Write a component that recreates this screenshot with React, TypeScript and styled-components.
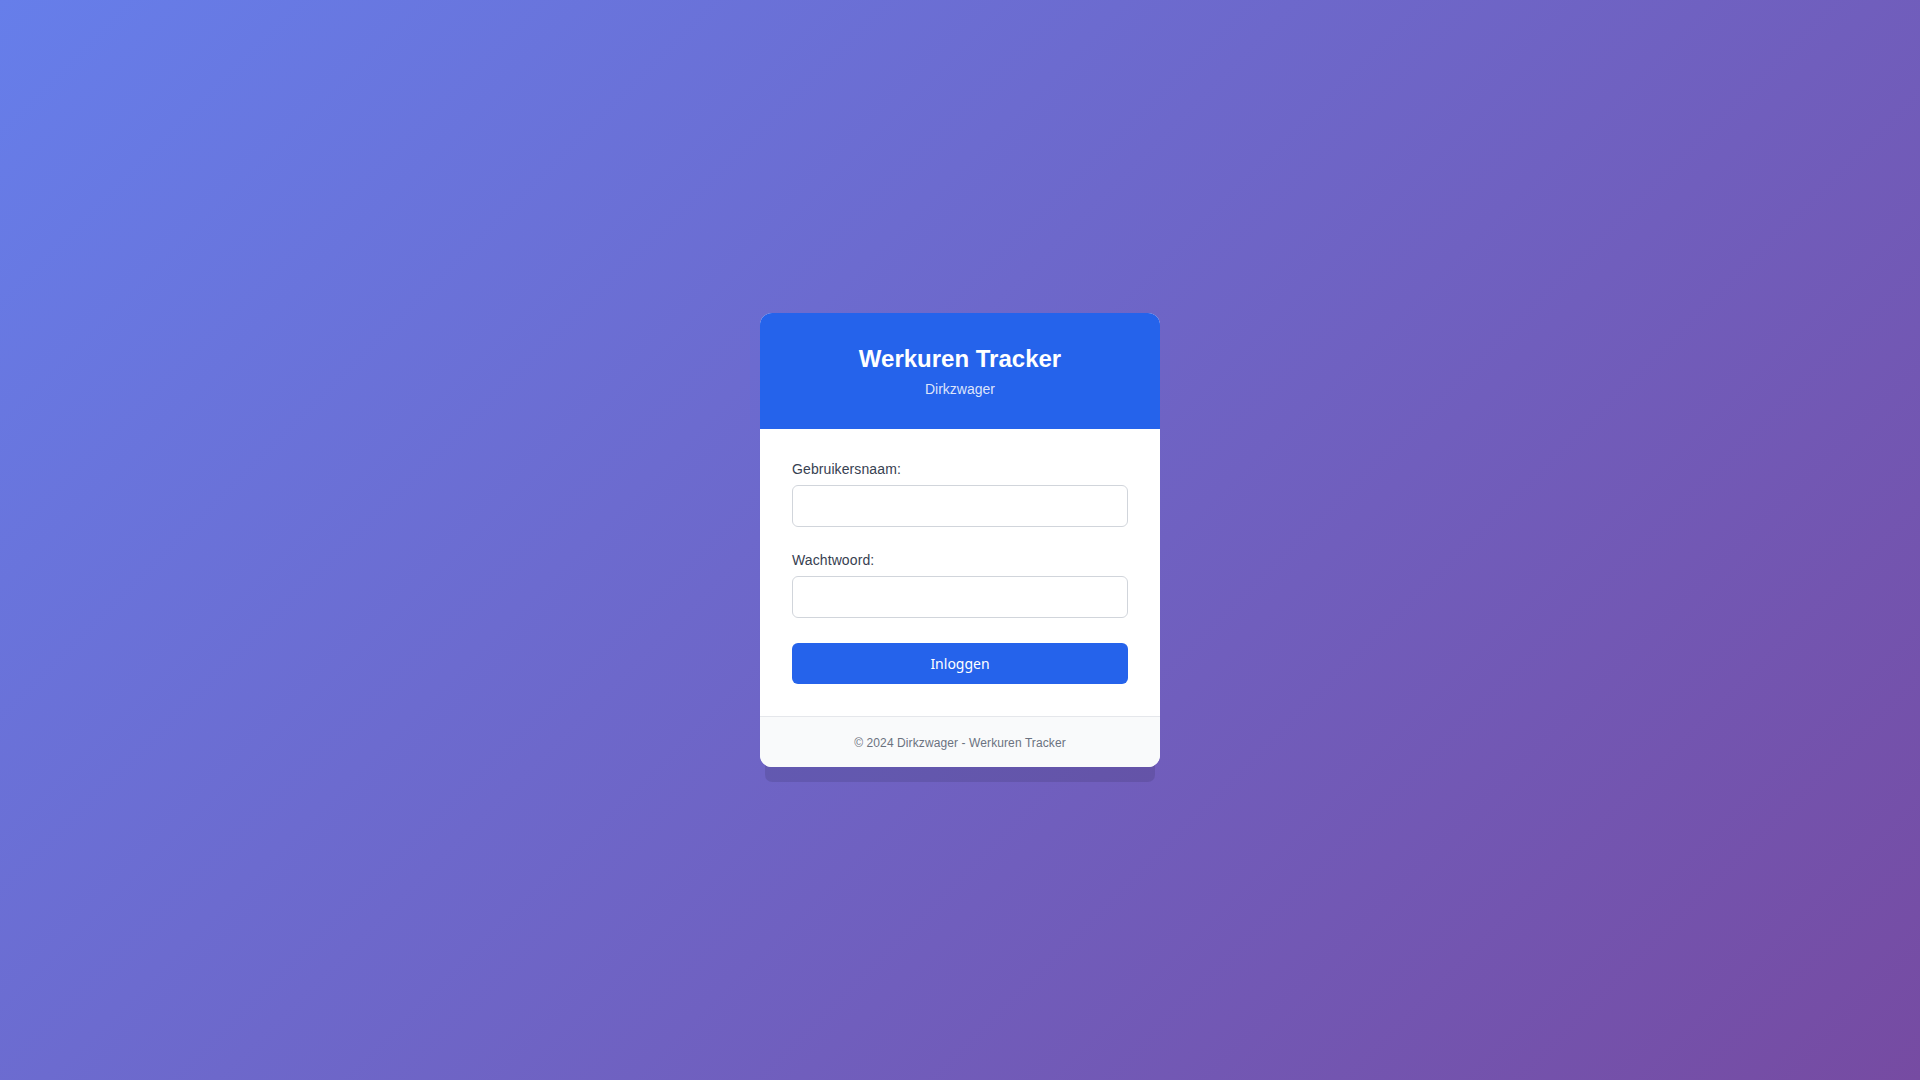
import styled, { createGlobalStyle } from "styled-components";

const GlobalStyle = createGlobalStyle`
  * {
    box-sizing: border-box;
  }
  html, body {
    margin: 0;
    padding: 0;
  }
  body {
    font-family: "Liberation Sans", Arial, sans-serif;
    background: linear-gradient(135deg, #667eea 0%, #764ba2 100%);
    min-height: 100vh;
  }
`;

export default function App(): JSX.Element {
  return (
    <>
      <GlobalStyle />
      <Page>
        <Card>
          <Header>
            <Title>Werkuren Tracker</Title>
            <Subtitle>Dirkzwager</Subtitle>
          </Header>
          <Form
            onSubmit={(e) => {
              e.preventDefault();
            }}
          >
            <FormGroup>
              <Label htmlFor="username">Gebruikersnaam:</Label>
              <Input id="username" type="text" />
            </FormGroup>
            <FormGroup>
              <Label htmlFor="password">Wachtwoord:</Label>
              <Input id="password" type="password" />
            </FormGroup>
            <LoginButton type="submit">Inloggen</LoginButton>
          </Form>
          <Footer>© 2024 Dirkzwager - Werkuren Tracker</Footer>
        </Card>
      </Page>
    </>
  );
}

const Page = styled.div`
  min-height: 100vh;
  display: flex;
  align-items: center;
  justify-content: center;
`;

const Card = styled.div`
  width: 400px;
  background: #ffffff;
  border-radius: 12px;
  overflow: hidden;
  box-shadow: 0 20px 0 -5px rgba(0, 0, 0, 0.1);
`;

const Header = styled.div`
  background: #2563eb;
  color: #ffffff;
  text-align: center;
  padding: 32px 20px 31px;
`;

const Title = styled.h1`
  margin: 0 0 8px;
  font-size: 24px;
  line-height: 28px;
  font-weight: bold;
`;

const Subtitle = styled.p`
  margin: 0;
  font-size: 14px;
  line-height: 17px;
  color: rgba(255, 255, 255, 0.85);
`;

const Form = styled.form`
  display: flex;
  flex-direction: column;
  gap: 25px;
  padding: 32px;
`;

const FormGroup = styled.div`
  display: flex;
  flex-direction: column;
`;

const Label = styled.label`
  display: block;
  font-size: 14px;
  line-height: 17px;
  margin-bottom: 7px;
  color: #374151;
  letter-spacing: 0.1px;
`;

const Input = styled.input`
  width: 100%;
  height: 42px;
  padding: 0 12px;
  font-size: 14px;
  font-family: inherit;
  border: 1px solid #d1d5db;
  border-radius: 6px;
  background: #ffffff;
  outline: none;
`;

const LoginButton = styled.button`
  width: 100%;
  padding: 12px;
  border: none;
  border-radius: 6px;
  background: #2563eb;
  color: #ffffff;
  font-family: "Noto Sans", sans-serif;
  font-size: 14px;
  line-height: 17px;
  font-weight: 400;
  cursor: pointer;
`;

const Footer = styled.div`
  background: #f9fafb;
  border-top: 1px solid #e5e7eb;
  text-align: center;
  padding: 19px 20px 17px;
  font-size: 12px;
  line-height: 14px;
  color: #6b7280;
  letter-spacing: 0.1px;
`;
